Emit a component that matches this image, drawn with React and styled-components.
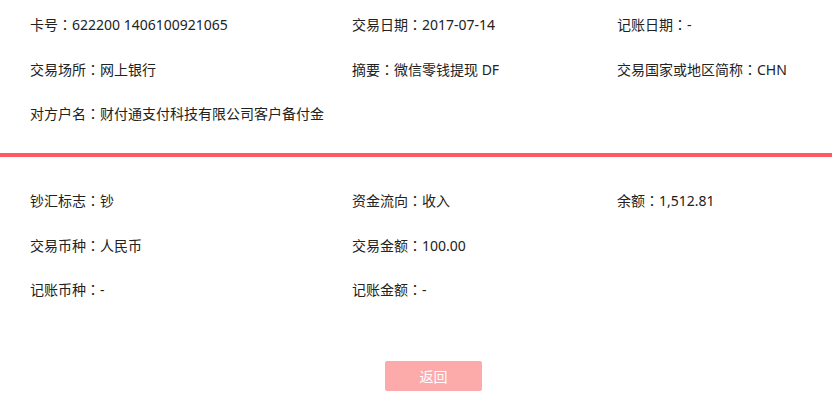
import React from 'react';
import styled, { createGlobalStyle } from 'styled-components';

const GlobalStyle = createGlobalStyle`
    html, body {
        margin: 0;
        padding: 0;
        background: #fff;
    }
    body {
        font-family: "Noto Sans", "Noto Sans CJK SC", sans-serif;
        color: #222;
    }
`;

const topItems = [
    ['卡号', '622200 1406100921065'],
    ['交易日期', '2017-07-14'],
    ['记账日期', '-'],
    ['交易场所', '网上银行'],
    ['摘要', '微信零钱提现 DF'],
    ['交易国家或地区简称', 'CHN'],
    ['对方户名', '财付通支付科技有限公司客户备付金'],
];

const bottomItems = [
    ['钞汇标志', '钞'],
    ['资金流向', '收入'],
    ['余额', '1,512.81'],
    ['交易币种', '人民币'],
    ['交易金额', '100.00'],
    null,
    ['记账币种', '-'],
    ['记账金额', '-'],
];

const InfoGrid = ({ items }) => (
    <Grid>
        {items.map((item, i) =>
            item ? (
                <Cell key={i}>
                    {item[0]}<Colon>：</Colon>{item[1]}
                </Cell>
            ) : (
                <Cell key={i} />
            )
        )}
    </Grid>
);

const App = () => {
    return (
        <Page>
            <GlobalStyle />
            <Section pad="14px 0 30px">
                <InfoGrid items={topItems} />
            </Section>
            <Divider />
            <Section pad="33px 0 0">
                <InfoGrid items={bottomItems} />
            </Section>
            <Footer>
                <BackButton type="button">返回</BackButton>
            </Footer>
        </Page>
    );
};

export default App;

const Page = styled.div`
    width: 832px;
    height: 400px;
    overflow: hidden;
    background: #fff;
`;

const Section = styled.div`
    padding: ${props => props.pad};
`;

const Grid = styled.div`
    display: grid;
    grid-template-columns: 322px 265px 1fr;
    row-gap: 24.5px;
    padding-left: 30px;
`;

const Cell = styled.div`
    font-size: 14px;
    line-height: 20px;
    height: 20px;
    white-space: nowrap;
`;

const Colon = styled.span`
    font-family: "Noto Sans CJK JP", sans-serif;
`;

const Divider = styled.div`
    height: 4px;
    background: #ff5a5f;
`;

const Footer = styled.div`
    display: flex;
    padding: 62px 0 0 385px;
`;

const BackButton = styled.button`
    width: 97px;
    height: 30px;
    border: none;
    border-radius: 2px;
    background: #fdaaab;
    color: #fff;
    font-size: 14px;
    font-family: "Noto Sans CJK SC", sans-serif;
    cursor: pointer;
    padding: 0;
`;
